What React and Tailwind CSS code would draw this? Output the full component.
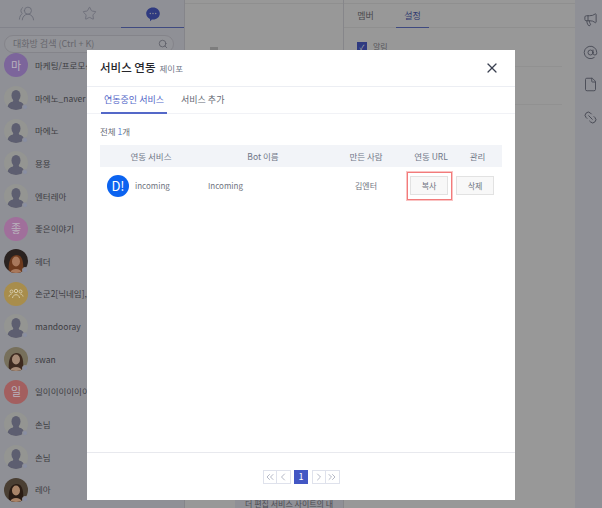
import React from "react";
import {
  AtSign,
  ChevronLeft,
  ChevronRight,
  ChevronsLeft,
  ChevronsRight,
  File,
  Link2,
  Megaphone,
  Search,
  Star,
  UsersRound,
  X,
} from "lucide-react";

function Guest() {
  return (
    <div className="relative w-6 h-6 shrink-0">
      <svg viewBox="0 0 24 24" className="w-6 h-6 rounded-full bg-[#949592]">
        <ellipse cx="12" cy="9.500" rx="4.500" ry="5.500" fill="#5d5e70" />
        <path d="M9.500 13h5l.5 2.500c3.500.8 5 2.500 5.500 5.500-2 2-5 3-8.500 3s-6.500-1-8.500-3c.5-3 2-4.700 5.500-5.500z" fill="#5d5e70" />
      </svg>
      <Dot />
    </div>
  );
}

function Dot() {
  return <span className="absolute right-0 bottom-0 w-[6px] h-[6px] rounded-full bg-[#8a8fa3] border border-[#8f9096]" />;
}

function Letter({ bg, children }) {
  return (
    <div className={`w-6 h-6 shrink-0 rounded-full flex items-center justify-center text-[11px] text-[#b9b3bd] ${bg}`}>
      {children}
    </div>
  );
}

function Photo({ bg, hair, skin }) {
  return (
    <div className="relative w-6 h-6 shrink-0">
      <svg viewBox="0 0 24 24" className={`w-6 h-6 rounded-full ${bg}`}>
        <path d="M5 24c-1-8 0-17 7-18s8 9 7 18z" fill={hair} />
        <ellipse cx="12" cy="12.500" rx="4" ry="5" fill={skin} />
        <path d="M6 24c1-3 3-4 6-4s5 1 6 4z" fill={skin} />
      </svg>
      <Dot />
    </div>
  );
}

function GroupAvatar() {
  return (
    <div className="w-6 h-6 shrink-0 rounded-full bg-[#a88d4c] flex items-center justify-center">
      <svg viewBox="0 0 16 16" className="w-4 h-4" fill="none" stroke="#d6cba8" strokeWidth="1">
        <circle cx="3.500" cy="5.500" r="1.500" />
        <circle cx="8" cy="5" r="1.700" />
        <circle cx="12.500" cy="5.500" r="1.500" />
        <path d="M1 10.500c.3-1.500 1.200-2.300 2.500-2.300" />
        <path d="M15 10.500c-.3-1.500-1.200-2.300-2.500-2.300" />
        <path d="M4.500 12c.3-2 1.600-3.300 3.500-3.300s3.200 1.300 3.500 3.300" />
      </svg>
    </div>
  );
}

const rooms = [
  { name: "마케팅/프로모션", avatar: <Letter bg="bg-[#7c659b]">마</Letter> },
  { name: "마에노_naver", avatar: <Guest /> },
  { name: "마에노", avatar: <Guest /> },
  { name: "용용", avatar: <Guest /> },
  { name: "엔터레아", avatar: <Guest /> },
  { name: "좋은이야기", avatar: <Letter bg="bg-[#a06f9b]">좋</Letter> },
  { name: "헤더", avatar: <Photo bg="bg-[#2a2220]" hair="#6d3a1e" skin="#a8785c" /> },
  { name: "손군2[닉네임],", avatar: <GroupAvatar /> },
  { name: "mandooray", avatar: <Guest /> },
  { name: "swan", avatar: <Photo bg="bg-[#77705c]" hair="#3d2a20" skin="#a58a76" /> },
  { name: "일이이이이이이", avatar: <Letter bg="bg-[#a35f5f]">일</Letter> },
  { name: "손님", avatar: <Guest /> },
  { name: "손님", avatar: <Guest /> },
  { name: "레아", avatar: <Photo bg="bg-[#4a3f33]" hair="#2a1c14" skin="#a98468" /> },
];

function Sidebar() {
  return (
    <aside className="w-[185px] shrink-0 h-full border-r border-[#85858a] bg-[#8f9096] flex flex-col">
      <div className="h-[28px] shrink-0 flex border-b border-[#82838b]">
        <div className="w-[52px] flex items-center justify-center">
          <UsersRound size={17} color="#6b6d78" strokeWidth={1.3} className="-scale-x-100" />
        </div>
        <div className="w-[69px] pl-[5px] flex items-center justify-center">
          <Star size={15} color="#6b6d78" strokeWidth={1.4} />
        </div>
        <div className="w-[63px] -mb-px border-b border-[#3f4a80] flex items-center justify-center">
          <svg viewBox="0 0 16 16" className="w-[16px] h-[16px]">
            <path d="M8 1.500c3.800 0 6.800 2.700 6.800 6 0 3.400-3 6-6.800 6-.4 0-.8 0-1.100-.1L5 15.200v-2.300C2.800 11.900 1.200 9.900 1.200 7.500c0-3.300 3-6 6.800-6z" fill="#2f3a80" />
            <circle cx="5.300" cy="7.500" r=".7" fill="#8f9096" />
            <circle cx="8" cy="7.500" r=".7" fill="#8f9096" />
            <circle cx="10.700" cy="7.500" r=".7" fill="#8f9096" />
          </svg>
        </div>
      </div>
      <div className="mx-1 mt-[7px] h-[18px] w-[170px] shrink-0 rounded-full border border-[#84848a] bg-[#929398] flex items-center justify-between pl-2 pr-[5px]">
        <span className="text-[9px] text-[#66666c]">대화방 검색 (Ctrl + K)</span>
        <Search size={10} color="#5c5d66" />
      </div>
      <div className="flex-1 overflow-hidden">
        <ul className="-mt-[4px]">
          {rooms.map((room, i) => (
            <li key={i} className="h-[32.65px] pl-1 flex items-center gap-[7px]">
              {room.avatar}
              <span className="text-[8.500px] text-[#3d3d42] whitespace-nowrap">{room.name}</span>
            </li>
          ))}
        </ul>
      </div>
    </aside>
  );
}

function ChatArea() {
  return (
    <main className="flex-1 h-full flex flex-col justify-between">
      <div className="mt-[3px] border-t border-[#8f8f8f] pt-[43px] pl-[25px] flex items-center gap-[20px]">
        <span className="w-[8px] h-[6px] bg-[#7d7d7d]" />
        <span className="text-[8px] leading-[6px] text-[#777]">· · ·</span>
      </div>
      <div className="h-[12px] flex">
        <div className="w-[50px] pl-[20px]">
          <span className="block w-[9px] h-[3px] mt-[1px] bg-[#3a2a2a]" />
        </div>
        <div className="flex-1 bg-[#8f9096] pl-[10px] pt-[4px] text-[8px] leading-[8px] text-[#4b4b52] whitespace-nowrap overflow-hidden">
          더 편집 서비스 사이트의 내
        </div>
      </div>
    </main>
  );
}

function SidePanel() {
  return (
    <section className="w-[232px] shrink-0 h-full border-l border-[#86868a] bg-[#989898]">
      <div className="mt-[3px] border-t border-b border-[#8f8f8f] h-[25px] flex pl-[5px]">
        <div className="w-[33px] h-full flex items-center justify-center text-[9px] text-[#4a4a4e]">멤버</div>
        <div className="ml-[14px] w-[33px] h-full box-content border-b border-[#3f4a80] flex items-center justify-center text-[9px] text-[#303870]">설정</div>
      </div>
      <div className="mx-[13px] h-[39px] border-b border-[#919191] pt-[14px] flex items-start gap-[6px] text-[8px] leading-[10px] text-[#55555a]">
        <span className="w-[10px] h-[10px] bg-[#2f3a80] flex items-center justify-center text-[7px] leading-none text-[#aaa]">✓</span>
        알림
      </div>
      <div className="mx-[13px] h-[38px] border-b border-[#919191]" />
    </section>
  );
}

function Rail() {
  return (
    <nav className="w-[27px] shrink-0 h-full bg-[#8f9096] flex flex-col items-center pt-[12px] pl-[4px] gap-[17.500px]">
      <Megaphone size={15} color="#4a4c56" strokeWidth={1.5} />
      <AtSign size={15} color="#4a4c56" strokeWidth={1.5} />
      <File size={15} color="#4a4c56" strokeWidth={1.5} />
      <Link2 size={15} color="#4a4c56" strokeWidth={1.5} className="rotate-45" />
    </nav>
  );
}

function PageButton({ children, className = "" }) {
  return (
    <span className={`w-[14.500px] h-[14px] border border-[#dfe2ec] flex items-center justify-center ${className}`}>
      {children}
    </span>
  );
}

function Modal() {
  return (
    <div className="absolute left-[87px] top-[50px] w-[428px] h-[450px] bg-white flex flex-col">
      <header className="h-[37px] shrink-0 border-b border-[#eceef3] flex items-center justify-between pl-[13px] pr-[15px]">
        <div className="flex items-baseline gap-1">
          <span className="text-[11.500px] font-medium text-[#26262b]">서비스 연동</span>
          <span className="text-[8.500px] text-[#6f7687]">제이포</span>
        </div>
        <X size={16} color="#3a4050" strokeWidth={1.8} />
      </header>
      <div className="h-[27px] shrink-0 border-b border-[#f1f2f6] flex pl-[14px] text-[9px]">
        <div className="w-[66px] -mb-px border-b-2 border-[#5468c8] flex items-center justify-center text-[#5468c8]">
          연동중인 서비스
        </div>
        <div className="ml-[14px] flex items-center text-[#666b75]">서비스 추가</div>
      </div>
      <div className="flex-1 px-[13px]">
        <p className="mt-[11px] h-[13px] flex items-center text-[8.500px] text-[#666b75]">
          전체&nbsp;<span className="text-[#5b8be0]">1</span>개
        </p>
        <div className="mt-[7px] h-[22px] bg-[#f2f4f8] grid grid-cols-[102px_122px_84px_46px_47px] items-center text-center text-[8.500px] text-[#6f7687]">
          <span>연동 서비스</span>
          <span>Bot 이름</span>
          <span>만든 사람</span>
          <span>연동 URL</span>
          <span>관리</span>
        </div>
        <div className="h-[37px] grid grid-cols-[102px_122px_84px_46px_47px] items-center text-[8px] text-[#6f7480]">
          <div className="flex items-center gap-[6px] pl-[7px]">
            <span className="w-[22px] h-[22px] rounded-full bg-[#0b63f0] flex items-center justify-center text-[13px] text-white">D!</span>
            incoming
          </div>
          <span className="pl-[6px]">Incoming</span>
          <span className="text-center">김엔터</span>
          <div className="relative ml-[2px] flex">
            <span className="w-[38px] h-[19px] bg-[#f8f8f8] border border-[#e2e2e2] flex items-center justify-center">복사</span>
            <span className="absolute -left-[3px] -top-[4px] w-[45px] h-[28px] border border-[#f27b7b] ring-1 ring-[#fac4c4]" />
          </div>
          <div className="flex pl-[2px]">
            <span className="w-[38px] h-[19px] bg-[#f8f8f8] border border-[#e2e2e2] flex items-center justify-center">삭제</span>
          </div>
        </div>
      </div>
      <footer className="h-[48px] shrink-0 border-t border-[#e8e9ee] flex items-center justify-center">
        <PageButton><ChevronsLeft size={12} color="#b4b8c6" /></PageButton>
        <PageButton className="-ml-px"><ChevronLeft size={12} color="#b4b8c6" /></PageButton>
        <span className="mx-[3.500px] w-[14px] h-[14px] bg-[#4357c4] flex items-center justify-center text-[9px] text-white">1</span>
        <PageButton><ChevronRight size={12} color="#b4b8c6" /></PageButton>
        <PageButton className="-ml-px"><ChevronsRight size={12} color="#b4b8c6" /></PageButton>
      </footer>
    </div>
  );
}

export default function App() {
  return (
    <div className="relative w-[602px] h-[508px] overflow-hidden flex bg-[#989898] font-['Noto_Sans_CJK_KR','Noto_Sans',sans-serif]">
      <Sidebar />
      <ChatArea />
      <SidePanel />
      <Rail />
      <Modal />
    </div>
  );
}
